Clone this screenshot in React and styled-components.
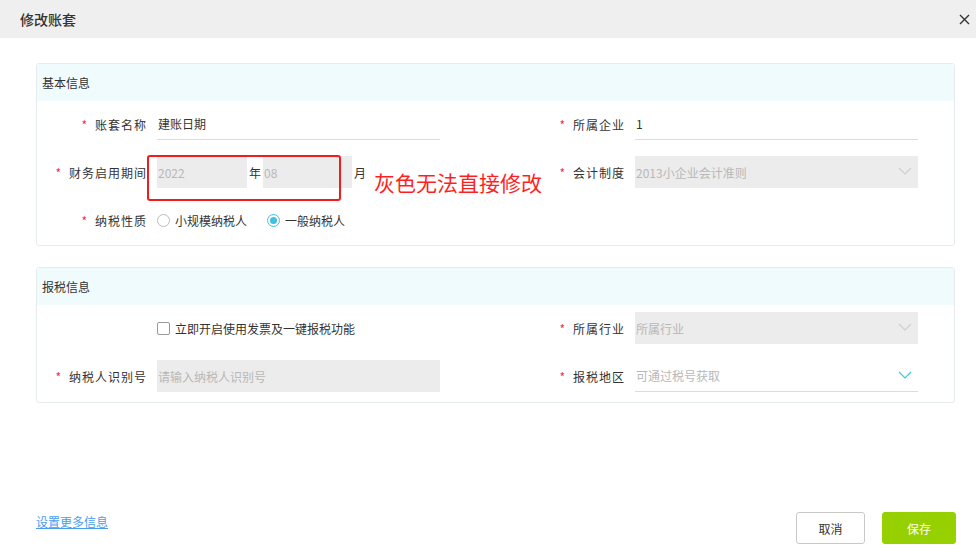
import React from 'react'
import styled, { createGlobalStyle } from 'styled-components'

const GlobalStyle = createGlobalStyle`
  html, body { margin: 0; padding: 0; background: #fff; }
  body {
    font-family: "Noto Sans CJK SC", "Noto Sans", sans-serif;
    color: #333;
  }
`

const Dialog = styled.div`
  width: 976px;
  height: 553px;
  display: flex;
  flex-direction: column;
  overflow: hidden;
`

const Header = styled.div`
  height: 38px;
  flex: none;
  background: #efefef;
  display: flex;
  align-items: center;
  justify-content: space-between;
  padding: 0 4px 0 20px;
  font-size: 14px;
  font-weight: 500;
  color: #333;
`

const Close = styled.button`
  border: none;
  background: transparent;
  width: 16px;
  height: 16px;
  padding: 0;
  display: flex;
  align-items: center;
  justify-content: center;
  cursor: pointer;
`

const Body = styled.div`
  flex: 1;
  padding: 25px 21px 0 36px;
  display: flex;
  flex-direction: column;
  gap: 21px;
`

const Card = styled.div`
  border: 1px solid #e6ecee;
  border-radius: 3px;
`

const CardTitle = styled.div`
  height: 37px;
  background: #f0fbfe;
  display: flex;
  align-items: center;
  padding-left: 5px;
  font-size: 12px;
  color: #333;
`

const CardBody = styled.div`
  padding: ${p => p.$pad || '7px 0 9px'};
  display: grid;
  grid-template-columns: 478px 1fr;
  row-gap: 16px;
`

const Item = styled.div`
  display: flex;
  align-items: center;
  height: 32px;
  gap: 10px;
`

const Label = styled.div`
  width: 110px;
  flex: none;
  display: flex;
  justify-content: flex-end;
  align-items: center;
  font-size: 12px;
  color: #333;
  letter-spacing: 1px;
`

const Star = styled.span`
  color: #f23030;
  font-size: 12px;
  margin-right: 7px;
`

const Field = styled.div`
  position: relative;
  width: ${p => p.$w || 283}px;
  height: 32px;
  box-sizing: border-box;
  display: flex;
  align-items: center;
  font-size: 12px;
  color: ${p => (p.$muted ? '#b8b8b8' : '#333')};
  background: ${p => (p.$gray ? '#ececec' : 'transparent')};
  border-bottom: ${p => (p.$line ? '1px solid #dcdcdc' : 'none')};
  padding-left: 1px;
`

const Chevron = styled.svg`
  position: absolute;
  right: 6px;
  top: 50%;
  margin-top: -5px;
`

const DateGroup = styled.div`
  position: relative;
  display: flex;
  align-items: center;
  height: 32px;
`

const Unit = styled.span`
  font-size: 12px;
  color: #333;
  width: 16px;
  text-align: center;
`

const Highlight = styled.div`
  position: absolute;
  left: -10px;
  top: -1px;
  width: 194px;
  height: 46px;
  box-sizing: border-box;
  border: 2px solid #f31c1c;
  border-radius: 3px;
  pointer-events: none;
`

const Note = styled.div`
  position: absolute;
  left: 217px;
  top: 13px;
  white-space: nowrap;
  font-size: 21px;
  line-height: 26px;
  color: #ff1f1f;
`

const Choice = styled.label`
  display: flex;
  align-items: center;
  gap: 5px;
  font-size: 12px;
  color: #333;
  margin-right: ${p => p.$gap || 0}px;
`

const Radio = styled.span`
  width: 13px;
  height: 13px;
  box-sizing: border-box;
  border-radius: 50%;
  border: 1px solid ${p => (p.$on ? '#3dc3df' : '#bdbdbd')};
  display: flex;
  align-items: center;
  justify-content: center;
  &::after {
    content: '';
    display: ${p => (p.$on ? 'block' : 'none')};
    width: 7px;
    height: 7px;
    border-radius: 50%;
    background: #3dc3df;
  }
`

const Check = styled.span`
  width: 13px;
  height: 13px;
  box-sizing: border-box;
  border: 1px solid #999;
  border-radius: 2px;
`

const Footer = styled.div`
  height: 64px;
  flex: none;
  display: flex;
  align-items: center;
  justify-content: space-between;
  padding: 14px 20px 0 36px;
  box-sizing: border-box;
`

const MoreLink = styled.a`
  font-size: 12px;
  color: #4a9cf0;
  text-decoration: underline;
  cursor: pointer;
  margin-bottom: 14px;
`

const Actions = styled.div`
  display: flex;
  gap: 17px;
`

const Button = styled.button`
  height: 32px;
  width: ${p => p.$w}px;
  box-sizing: border-box;
  border-radius: 3px;
  font-family: inherit;
  font-size: 12px;
  cursor: pointer;
  border: 1px solid ${p => (p.$primary ? '#97d000' : '#c9c9c9')};
  background: ${p => (p.$primary ? '#97d000' : '#fff')};
  color: ${p => (p.$primary ? '#fff' : '#333')};
`

function Down({ color }) {
  return (
    <Chevron width="14" height="8" viewBox="0 0 14 8">
      <path d="M1 1l6 6 6-6" fill="none" stroke={color} strokeWidth="1.2" />
    </Chevron>
  )
}

function FormLabel({ children, required = true }) {
  return (
    <Label>
      {required && <Star>*</Star>}
      {children}
    </Label>
  )
}

export default function App() {
  return (
    <Dialog>
      <GlobalStyle />
      <Header>
        <span>修改账套</span>
        <Close aria-label="close">
          <svg width="11" height="11" viewBox="0 0 11 11">
            <path d="M1 1l9 9M10 1l-9 9" stroke="#333" strokeWidth="1.4" />
          </svg>
        </Close>
      </Header>

      <Body>
        <Card>
          <CardTitle>基本信息</CardTitle>
          <CardBody>
            <Item>
              <FormLabel>账套名称</FormLabel>
              <Field $line>建账日期</Field>
            </Item>
            <Item>
              <FormLabel>所属企业</FormLabel>
              <Field $line>1</Field>
            </Item>

            <Item>
              <FormLabel>财务启用期间</FormLabel>
              <DateGroup>
                <Field $gray $muted $w={90}>2022</Field>
                <Unit>年</Unit>
                <Field $gray $muted $w={89}>08</Field>
                <Unit>月</Unit>
                <Highlight />
                <Note>灰色无法直接修改</Note>
              </DateGroup>
            </Item>
            <Item>
              <FormLabel>会计制度</FormLabel>
              <Field $gray $muted>
                2013小企业会计准则
                <Down color="#cfcfcf" />
              </Field>
            </Item>

            <Item>
              <FormLabel>纳税性质</FormLabel>
              <Choice $gap={10}>
                <Radio />
                小规模纳税人
              </Choice>
              <Choice>
                <Radio $on />
                一般纳税人
              </Choice>
            </Item>
            <div />
          </CardBody>
        </Card>

        <Card>
          <CardTitle>报税信息</CardTitle>
          <CardBody $pad="7px 0 10px">
            <Item>
              <Label />
              <Choice>
                <Check />
                立即开启使用发票及一键报税功能
              </Choice>
            </Item>
            <Item>
              <FormLabel>所属行业</FormLabel>
              <Field $gray $muted>
                所属行业
                <Down color="#cfcfcf" />
              </Field>
            </Item>

            <Item>
              <FormLabel>纳税人识别号</FormLabel>
              <Field $gray $muted>请输入纳税人识别号</Field>
            </Item>
            <Item>
              <FormLabel>报税地区</FormLabel>
              <Field $line $muted>
                可通过税号获取
                <Down color="#3fc6e2" />
              </Field>
            </Item>
          </CardBody>
        </Card>
      </Body>

      <Footer>
        <MoreLink>设置更多信息</MoreLink>
        <Actions>
          <Button $w={69}>取消</Button>
          <Button $primary $w={74}>保存</Button>
        </Actions>
      </Footer>
    </Dialog>
  )
}
